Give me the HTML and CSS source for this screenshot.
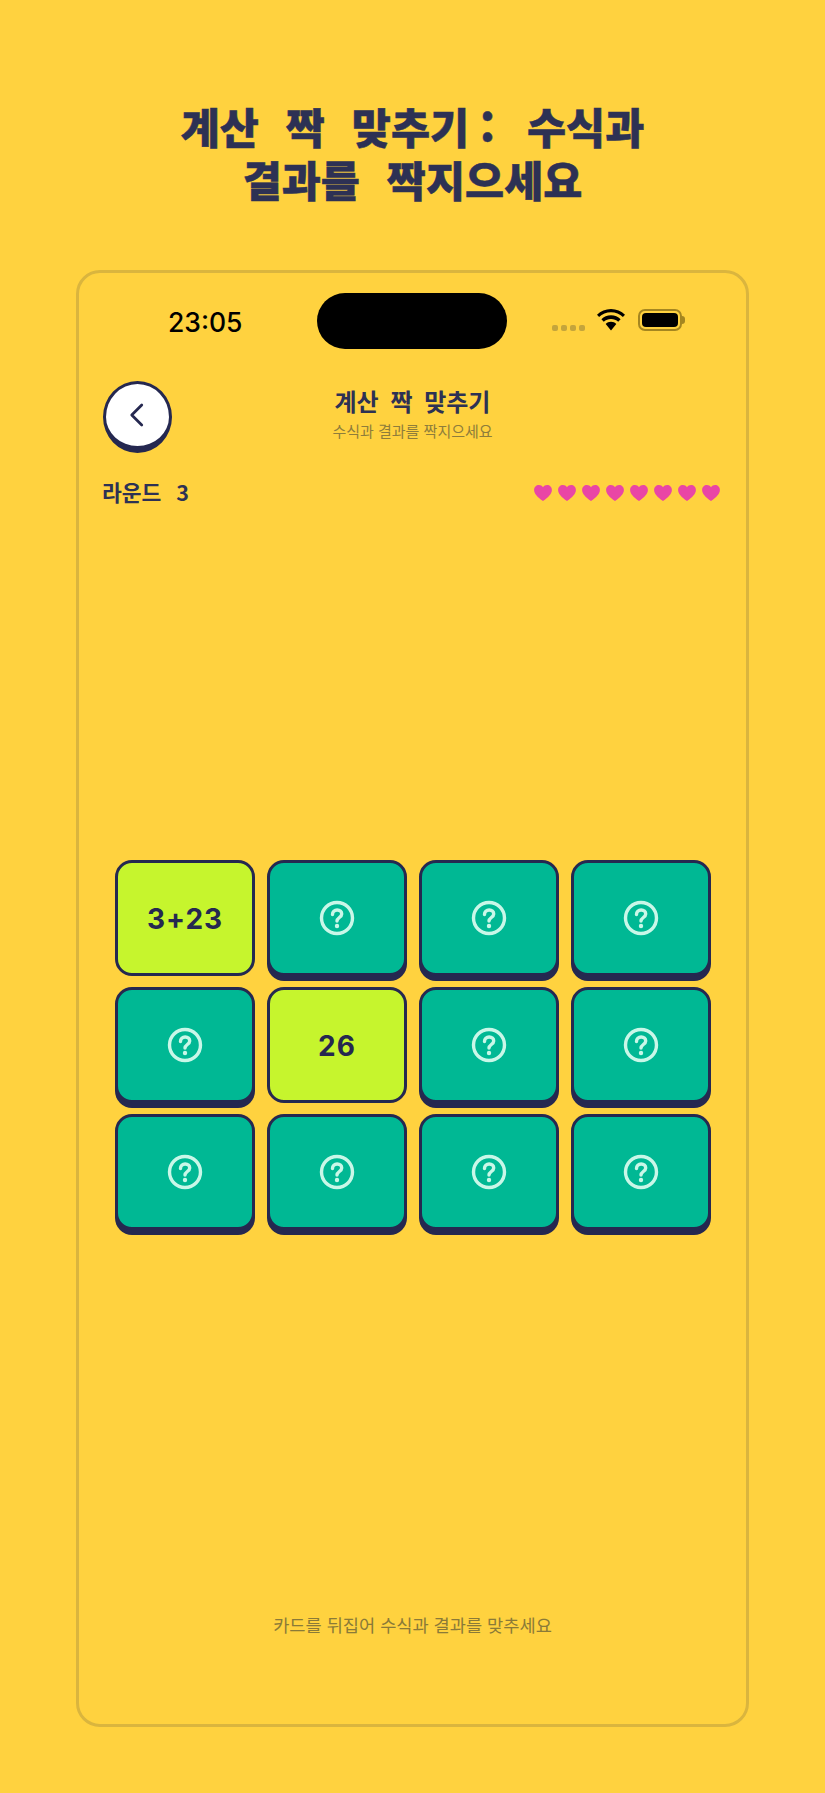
FILE: index.html
```html
<!DOCTYPE html>
<html lang="ko">

<head>
    <meta charset="UTF-8">
    <meta name="viewport" content="width=device-width, initial-scale=1.0">
    <title>계산 짝 맞추기</title>
    <link rel="stylesheet" href="styles.css">
</head>

<body>

    <h1 class="headline">계산 짝 맞추기<span class="colon">:</span> 수식과<br>결과를 짝지으세요</h1>

    <main class="phone">
        <div class="status-bar">
            <span class="clock">23:05</span>
            <div class="island"></div>
            <div class="status-icons">
                <div class="signal"><i></i><i></i><i></i><i></i></div>
                <svg class="wifi" viewBox="0 0 28 22" aria-hidden="true">
                    <path d="M14 3.2c4.6 0 8.8 1.8 11.900 4.800L28 5.700C24.300 2.100 19.400 0 14 0S3.700 2.100 0 5.700L2.100 8C5.200 5 9.400 3.200 14 3.200z"/>
                    <path d="M14 10c2.800 0 5.300 1 7.200 2.800l2.400-2.500C21.100 7.900 17.800 6.300 14 6.300s-7.100 1.600-9.600 4l2.400 2.500C8.700 11 11.200 10 14 10z"/>
                    <path d="M14 12.800c-2.100 0-4 .8-5.300 2.100L14 21.500l5.300-6.600c-1.300-1.300-3.200-2.100-5.300-2.100z"/>
                </svg>
                <div class="battery"><div class="battery-level"></div></div>
            </div>
        </div>

        <div class="nav">
            <button class="back" aria-label="뒤로">
                <svg viewBox="0 0 24 24" aria-hidden="true"><path d="M15 4 7 12l8 8"/></svg>
            </button>
            <div class="nav-title">
                <div class="game-name">계산 짝 맞추기</div>
                <div class="game-sub">수식과 결과를 짝지으세요</div>
            </div>
        </div>

        <div class="score-row">
            <span class="round">라운드 3</span>
            <div class="hearts">
                <svg viewBox="0 0 20 18"><path d="M10 18C4 13.500 0 10 0 5.500 0 2.300 2.400 0 5.400 0 7.300 0 9 .9 10 2.500 11 .9 12.700 0 14.600 0 17.600 0 20 2.300 20 5.500 20 10 16 13.500 10 18z"/></svg>
                <svg viewBox="0 0 20 18"><path d="M10 18C4 13.500 0 10 0 5.500 0 2.300 2.400 0 5.400 0 7.300 0 9 .9 10 2.500 11 .9 12.700 0 14.600 0 17.600 0 20 2.300 20 5.500 20 10 16 13.500 10 18z"/></svg>
                <svg viewBox="0 0 20 18"><path d="M10 18C4 13.500 0 10 0 5.500 0 2.300 2.400 0 5.400 0 7.300 0 9 .9 10 2.500 11 .9 12.700 0 14.600 0 17.600 0 20 2.300 20 5.500 20 10 16 13.500 10 18z"/></svg>
                <svg viewBox="0 0 20 18"><path d="M10 18C4 13.500 0 10 0 5.500 0 2.300 2.400 0 5.400 0 7.300 0 9 .9 10 2.500 11 .9 12.700 0 14.600 0 17.600 0 20 2.300 20 5.500 20 10 16 13.500 10 18z"/></svg>
                <svg viewBox="0 0 20 18"><path d="M10 18C4 13.500 0 10 0 5.500 0 2.300 2.400 0 5.400 0 7.300 0 9 .9 10 2.500 11 .9 12.700 0 14.600 0 17.600 0 20 2.300 20 5.500 20 10 16 13.500 10 18z"/></svg>
                <svg viewBox="0 0 20 18"><path d="M10 18C4 13.500 0 10 0 5.500 0 2.300 2.400 0 5.400 0 7.300 0 9 .9 10 2.500 11 .9 12.700 0 14.600 0 17.600 0 20 2.300 20 5.500 20 10 16 13.500 10 18z"/></svg>
                <svg viewBox="0 0 20 18"><path d="M10 18C4 13.500 0 10 0 5.500 0 2.300 2.400 0 5.400 0 7.300 0 9 .9 10 2.500 11 .9 12.700 0 14.600 0 17.600 0 20 2.300 20 5.500 20 10 16 13.500 10 18z"/></svg>
                <svg viewBox="0 0 20 18"><path d="M10 18C4 13.500 0 10 0 5.500 0 2.300 2.400 0 5.400 0 7.300 0 9 .9 10 2.500 11 .9 12.700 0 14.600 0 17.600 0 20 2.300 20 5.500 20 10 16 13.500 10 18z"/></svg>
            </div>
        </div>

        <div class="board">
            <div class="card open">3+23</div>
            <div class="card"><svg class="q" viewBox="0 0 36 36"><circle cx="18" cy="18" r="15.500"/><path d="M13.500 14.500c0-2.600 2-4.500 4.700-4.500 2.600 0 4.500 1.700 4.500 4 0 3.500-4.700 3.500-4.700 7"/><circle class="dot" cx="18" cy="26" r="2.200"/></svg></div>
            <div class="card"><svg class="q" viewBox="0 0 36 36"><circle cx="18" cy="18" r="15.500"/><path d="M13.500 14.500c0-2.600 2-4.500 4.700-4.500 2.600 0 4.500 1.700 4.500 4 0 3.500-4.700 3.500-4.700 7"/><circle class="dot" cx="18" cy="26" r="2.200"/></svg></div>
            <div class="card"><svg class="q" viewBox="0 0 36 36"><circle cx="18" cy="18" r="15.500"/><path d="M13.500 14.500c0-2.600 2-4.500 4.700-4.500 2.600 0 4.500 1.700 4.500 4 0 3.500-4.700 3.500-4.700 7"/><circle class="dot" cx="18" cy="26" r="2.200"/></svg></div>

            <div class="card"><svg class="q" viewBox="0 0 36 36"><circle cx="18" cy="18" r="15.500"/><path d="M13.500 14.500c0-2.600 2-4.500 4.700-4.500 2.600 0 4.500 1.700 4.500 4 0 3.500-4.700 3.500-4.700 7"/><circle class="dot" cx="18" cy="26" r="2.200"/></svg></div>
            <div class="card open">26</div>
            <div class="card"><svg class="q" viewBox="0 0 36 36"><circle cx="18" cy="18" r="15.500"/><path d="M13.500 14.500c0-2.600 2-4.500 4.700-4.500 2.600 0 4.500 1.700 4.500 4 0 3.500-4.700 3.500-4.700 7"/><circle class="dot" cx="18" cy="26" r="2.200"/></svg></div>
            <div class="card"><svg class="q" viewBox="0 0 36 36"><circle cx="18" cy="18" r="15.500"/><path d="M13.500 14.500c0-2.600 2-4.500 4.700-4.500 2.600 0 4.500 1.700 4.500 4 0 3.500-4.700 3.500-4.700 7"/><circle class="dot" cx="18" cy="26" r="2.200"/></svg></div>

            <div class="card"><svg class="q" viewBox="0 0 36 36"><circle cx="18" cy="18" r="15.500"/><path d="M13.500 14.500c0-2.600 2-4.500 4.700-4.500 2.600 0 4.500 1.700 4.500 4 0 3.500-4.700 3.500-4.700 7"/><circle class="dot" cx="18" cy="26" r="2.200"/></svg></div>
            <div class="card"><svg class="q" viewBox="0 0 36 36"><circle cx="18" cy="18" r="15.500"/><path d="M13.500 14.500c0-2.600 2-4.500 4.700-4.500 2.600 0 4.500 1.700 4.500 4 0 3.500-4.700 3.500-4.700 7"/><circle class="dot" cx="18" cy="26" r="2.200"/></svg></div>
            <div class="card"><svg class="q" viewBox="0 0 36 36"><circle cx="18" cy="18" r="15.500"/><path d="M13.500 14.500c0-2.600 2-4.500 4.700-4.500 2.600 0 4.500 1.700 4.500 4 0 3.500-4.700 3.500-4.700 7"/><circle class="dot" cx="18" cy="26" r="2.200"/></svg></div>
            <div class="card"><svg class="q" viewBox="0 0 36 36"><circle cx="18" cy="18" r="15.500"/><path d="M13.500 14.500c0-2.600 2-4.500 4.700-4.500 2.600 0 4.500 1.700 4.500 4 0 3.500-4.700 3.500-4.700 7"/><circle class="dot" cx="18" cy="26" r="2.200"/></svg></div>
        </div>

        <p class="hint">카드를 뒤집어 수식과 결과를 맞추세요</p>
    </main>

</body>

</html>
```

FILE: styles.css
```css
* {
    box-sizing: border-box;
}

body {
    font-family: "Noto Sans CJK KR", "Noto Sans", sans-serif;
    margin: 0;
    height: 1793px;
    padding: 99px 76px 66px 76px;
    background-color: #ffd23f;
    color: #2d3154;
    display: flex;
    flex-direction: column;
    overflow: hidden;
}

.headline {
    font-size: 42.500px;
    font-weight: 900;
    line-height: 53px;
    word-spacing: 15px;
    -webkit-text-stroke: 0.500px #2d3154;
    text-align: center;
    margin: 0 -40px 65px -40px;
}

.colon {
    padding: 0 5px 0 11px;
}

.phone {
    flex: 1;
    border: 3px solid #dab53e;
    border-radius: 24px;
    padding: 20px 24px 87px 24px;
    display: flex;
    flex-direction: column;
}

.status-bar {
    display: flex;
    align-items: center;
    height: 56px;
}

.clock {
    font-family: Inter, sans-serif;
    font-size: 26.500px;
    font-weight: 500;
    color: #000;
    width: 214px;
    padding-left: 65px;
    padding-top: 1px;
}

.island {
    width: 190px;
    height: 56px;
    background-color: #000;
    border-radius: 28px;
}

.status-icons {
    display: flex;
    align-items: center;
    margin-left: 45px;
}

.signal {
    display: flex;
    gap: 3px;
    margin: 13px 12px 0 0;
}

.signal i {
    width: 6px;
    height: 6px;
    border-radius: 2px;
    background-color: #c4a53c;
}

.wifi {
    width: 28px;
    height: 22px;
    margin-top: -3px;
}

.battery {
    width: 44px;
    height: 22px;
    margin-left: 13px;
    margin-top: -3px;
    border: 2px solid #a58620;
    border-radius: 7px;
    padding: 2px;
    position: relative;
}

.battery::after {
    content: "";
    position: absolute;
    right: -5px;
    top: 5px;
    width: 3px;
    height: 8px;
    background-color: #a58620;
    border-radius: 0 3px 3px 0;
}

.battery-level {
    height: 100%;
    background-color: #000;
    border-radius: 4px;
}

.nav {
    display: flex;
    align-items: flex-start;
    margin-top: 32px;
}

.back {
    width: 69px;
    height: 72px;
    padding: 0;
    background-color: #fff;
    border: 3.500px solid #252850;
    border-bottom-width: 7px;
    border-radius: 50%;
    display: flex;
    align-items: center;
    justify-content: center;
}

.back svg {
    width: 30px;
    height: 30px;
    fill: none;
    stroke: #252850;
    stroke-width: 2.200;
    stroke-linecap: round;
    stroke-linejoin: round;
}

.nav-title {
    flex: 1;
    text-align: center;
    padding: 2px 69px 0 0;
}

.game-name {
    font-size: 24px;
    font-weight: 700;
    line-height: 36px;
    word-spacing: 5px;
}

.game-sub {
    font-size: 15px;
    line-height: 22px;
    margin-top: 1px;
    color: #8e7d3b;
}

.score-row {
    display: flex;
    justify-content: space-between;
    align-items: center;
    margin-top: 24px;
    height: 32px;
}

.round {
    font-size: 21.500px;
    font-weight: 600;
    word-spacing: 9px;
    margin: -3px 0 0 -1px;
}

.hearts {
    display: flex;
    gap: 6px;
    margin-right: 2px;
}

.hearts svg {
    width: 18px;
    height: 16px;
    fill: #e946a5;
}

.board {
    display: grid;
    grid-template-columns: repeat(4, 140px);
    gap: 11px 12px;
    margin: 351px 0 0 12px;
}

.card {
    height: 116px;
    background-color: #00b894;
    border: 3px solid #252850;
    border-radius: 17px;
    box-shadow: 0 5px 0 #252850;
    display: flex;
    align-items: center;
    justify-content: center;
}

.card.open {
    background-color: #c6f52d;
    box-shadow: none;
    padding-top: 2px;
    font-family: Inter, sans-serif;
    font-size: 28px;
    font-weight: 700;
    letter-spacing: 1px;
    color: #252850;
}

.q {
    width: 36px;
    height: 36px;
    fill: none;
    stroke: #c9f7e8;
    stroke-width: 3.400;
    stroke-linecap: round;
}

.q .dot {
    fill: #c9f7e8;
    stroke: none;
}

.hint {
    font-size: 17.600px;
    text-align: center;
    color: #8a7a38;
    margin: auto 0 0 0;
}
```
